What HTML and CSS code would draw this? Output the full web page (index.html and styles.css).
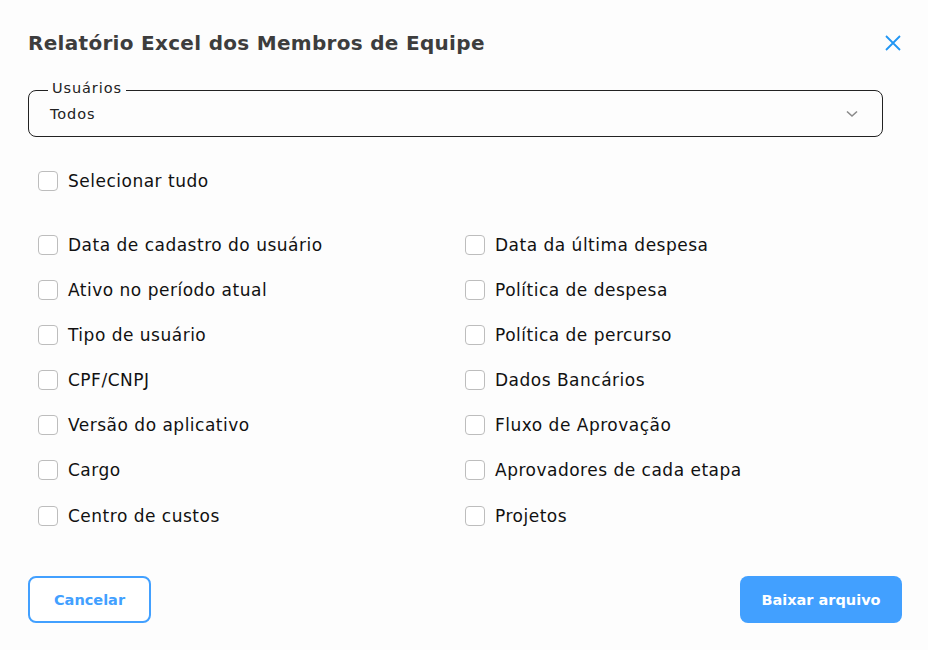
FILE: index.html
```html
<!DOCTYPE html>
<html lang="pt">
<head>
<meta charset="utf-8">
<link rel="stylesheet" href="styles.css">
</head>
<body>
<div class="dialog">
  <header class="head">
    <h1 class="title">Relatório Excel dos Membros de Equipe</h1>
    <button class="close" aria-label="Fechar">
      <svg width="18" height="18" viewBox="0 0 18 18"><path d="M2 2L16 16M16 2L2 16" stroke="#2196f3" stroke-width="1.8" fill="none"/></svg>
    </button>
  </header>
  <div class="select">
    <span class="legend">Usuários</span>
    <span class="value">Todos</span>
    <svg class="chev" width="12" height="8" viewBox="0 0 12 8"><path d="M1 1.5L6 6L11 1.5" stroke="#8a8a8a" stroke-width="1.6" fill="none"/></svg>
  </div>
  <label class="check all"><span class="box"></span><span>Selecionar tudo</span></label>
  <div class="grid">
    <label class="check"><span class="box"></span><span>Data de cadastro do usuário</span></label>
    <label class="check"><span class="box"></span><span>Data da última despesa</span></label>
    <label class="check"><span class="box"></span><span>Ativo no período atual</span></label>
    <label class="check"><span class="box"></span><span>Política de despesa</span></label>
    <label class="check"><span class="box"></span><span>Tipo de usuário</span></label>
    <label class="check"><span class="box"></span><span>Política de percurso</span></label>
    <label class="check"><span class="box"></span><span>CPF/CNPJ</span></label>
    <label class="check"><span class="box"></span><span>Dados Bancários</span></label>
    <label class="check"><span class="box"></span><span>Versão do aplicativo</span></label>
    <label class="check"><span class="box"></span><span>Fluxo de Aprovação</span></label>
    <label class="check"><span class="box"></span><span>Cargo</span></label>
    <label class="check"><span class="box"></span><span>Aprovadores de cada etapa</span></label>
    <label class="check last"><span class="box"></span><span>Centro de custos</span></label>
    <label class="check last"><span class="box"></span><span>Projetos</span></label>
  </div>
  <footer class="foot">
    <button class="btn outline">Cancelar</button>
    <button class="btn solid">Baixar arquivo</button>
  </footer>
</div>
</body>
</html>
```
FILE: styles.css
```css
* { box-sizing: border-box; }
html, body { margin: 0; padding: 0; background: #fdfdfd; }
body { font-family: "DejaVu Sans", "Open Sans", sans-serif; color: #111; }
.dialog { width: 928px; height: 650px; padding: 26px 26px 0 28px; }
.head { display: flex; justify-content: space-between; align-items: center; height: 34px; }
.title { margin: 0; font-size: 20px; font-weight: 700; color: #3d3d3d; letter-spacing: 0.3px; }
.close { border: 0; background: none; padding: 0; width: 18px; height: 18px; cursor: pointer; }
.select { margin: 30px 19px 0 0; border: 1px solid #222; border-radius: 8px; height: 47px; padding: 0 24px 0 21px; display: flex; align-items: center; justify-content: space-between; position: relative; }
.legend { position: absolute; left: 19px; top: -12px; font-size: 14.5px; line-height: 18px; padding: 0 4px; background: #fdfdfd; color: #222; letter-spacing: 0.9px; }
.value { font-size: 14.5px; letter-spacing: 0.9px; color: #222; }
.check { display: flex; align-items: center; gap: 10px; font-size: 17px; letter-spacing: 0.5px; color: #111; height: 20px; }
.box { width: 20px; height: 20px; border: 1px solid #bdbdbd; border-radius: 4px; background: #fff; flex: none; }
.all { margin: 34px 0 0 10px; }
.grid { display: grid; grid-template-columns: 427px 1fr; row-gap: 25px; margin: 44px 0 0 10px; }
.last { margin-top: 1px; }
.foot { display: flex; justify-content: space-between; margin: 50px 0 0 0; }
.btn { height: 47px; border-radius: 8px; font-family: inherit; font-size: 14.5px; font-weight: 700; cursor: pointer; }
.outline { width: 123px; background: #fff; border: 2px solid #42a0ff; color: #42a0ff; }
.solid { width: 162px; background: #42a0ff; border: 0; color: #fff; }
```
